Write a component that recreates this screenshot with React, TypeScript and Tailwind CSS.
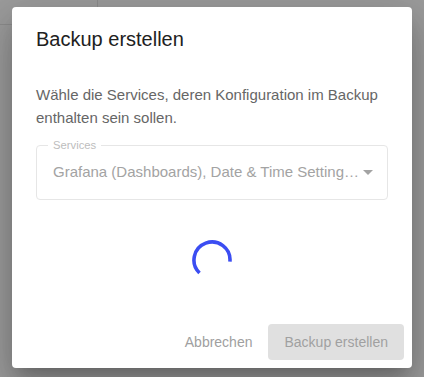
import React from "react";

export default function App() {
  return (
    <div className="relative w-[424px] h-[377px] overflow-hidden bg-[#9c9c9c] font-['Liberation_Sans',Arial,sans-serif]">
      {/* faint underlying page lines */}
      <div className="absolute left-[97px] top-0 h-[10px] w-px bg-[#8d8d8d]" />
      <div className="absolute left-0 top-[24px] h-px w-[14px] bg-[#8d8d8d]" />

      <div className="absolute left-[12px] top-[7px] w-[400px] h-[361px] bg-white rounded-[4px] flex flex-col shadow-[0px_11px_15px_-7px_rgba(0,0,0,0.2),0px_24px_38px_3px_rgba(0,0,0,0.14),0px_9px_46px_8px_rgba(0,0,0,0.12)]">
        <h2 className="px-6 pt-4 pb-4 text-[20px] leading-[32px] text-[#212121]">Backup erstellen</h2>
        <div className="px-6 pt-3 flex-1 flex flex-col">
          <p className="text-[15px] leading-[23px] text-[#666666]">
            Wähle die Services, deren Konfiguration im Backup enthalten sein sollen.
          </p>
          <div className="relative mt-4 h-[55px] border border-[#e6e6e6] rounded-[4px] flex items-center pl-4 pr-[14px]">
            <span className="absolute left-[11px] top-[-8px] px-[5px] bg-white text-[11.25px] leading-[14px] text-[#bdbdbd]">Services</span>
            <span className="flex-1 whitespace-nowrap text-[15px] text-[#a3a3a3]">Grafana (Dashboards), Date &amp; Time Setting…</span>
            <svg width="10" height="5" viewBox="0 0 10 5" className="ml-[3px] shrink-0">
              <path d="M0 0 L5 5 L10 0 Z" fill="#a3a3a3" />
            </svg>
          </div>
          <div className="flex justify-center mt-10">
            <svg width="40" height="40" viewBox="0 0 40 40">
              <path d="M7.5 32.95 A18 18 0 1 1 37.93 21.57" fill="none" stroke="#3b4df2" strokeWidth="3.6" />
            </svg>
          </div>
        </div>
        <div className="flex justify-end items-center gap-2 p-2">
          <button className="h-9 px-2 rounded-[4px] text-[14px] text-[#a0a0a0]">Abbrechen</button>
          <button className="h-9 px-4 rounded-[4px] text-[14px] text-[#a0a0a0] bg-[#e0e0e0]">Backup erstellen</button>
        </div>
      </div>
    </div>
  );
}
